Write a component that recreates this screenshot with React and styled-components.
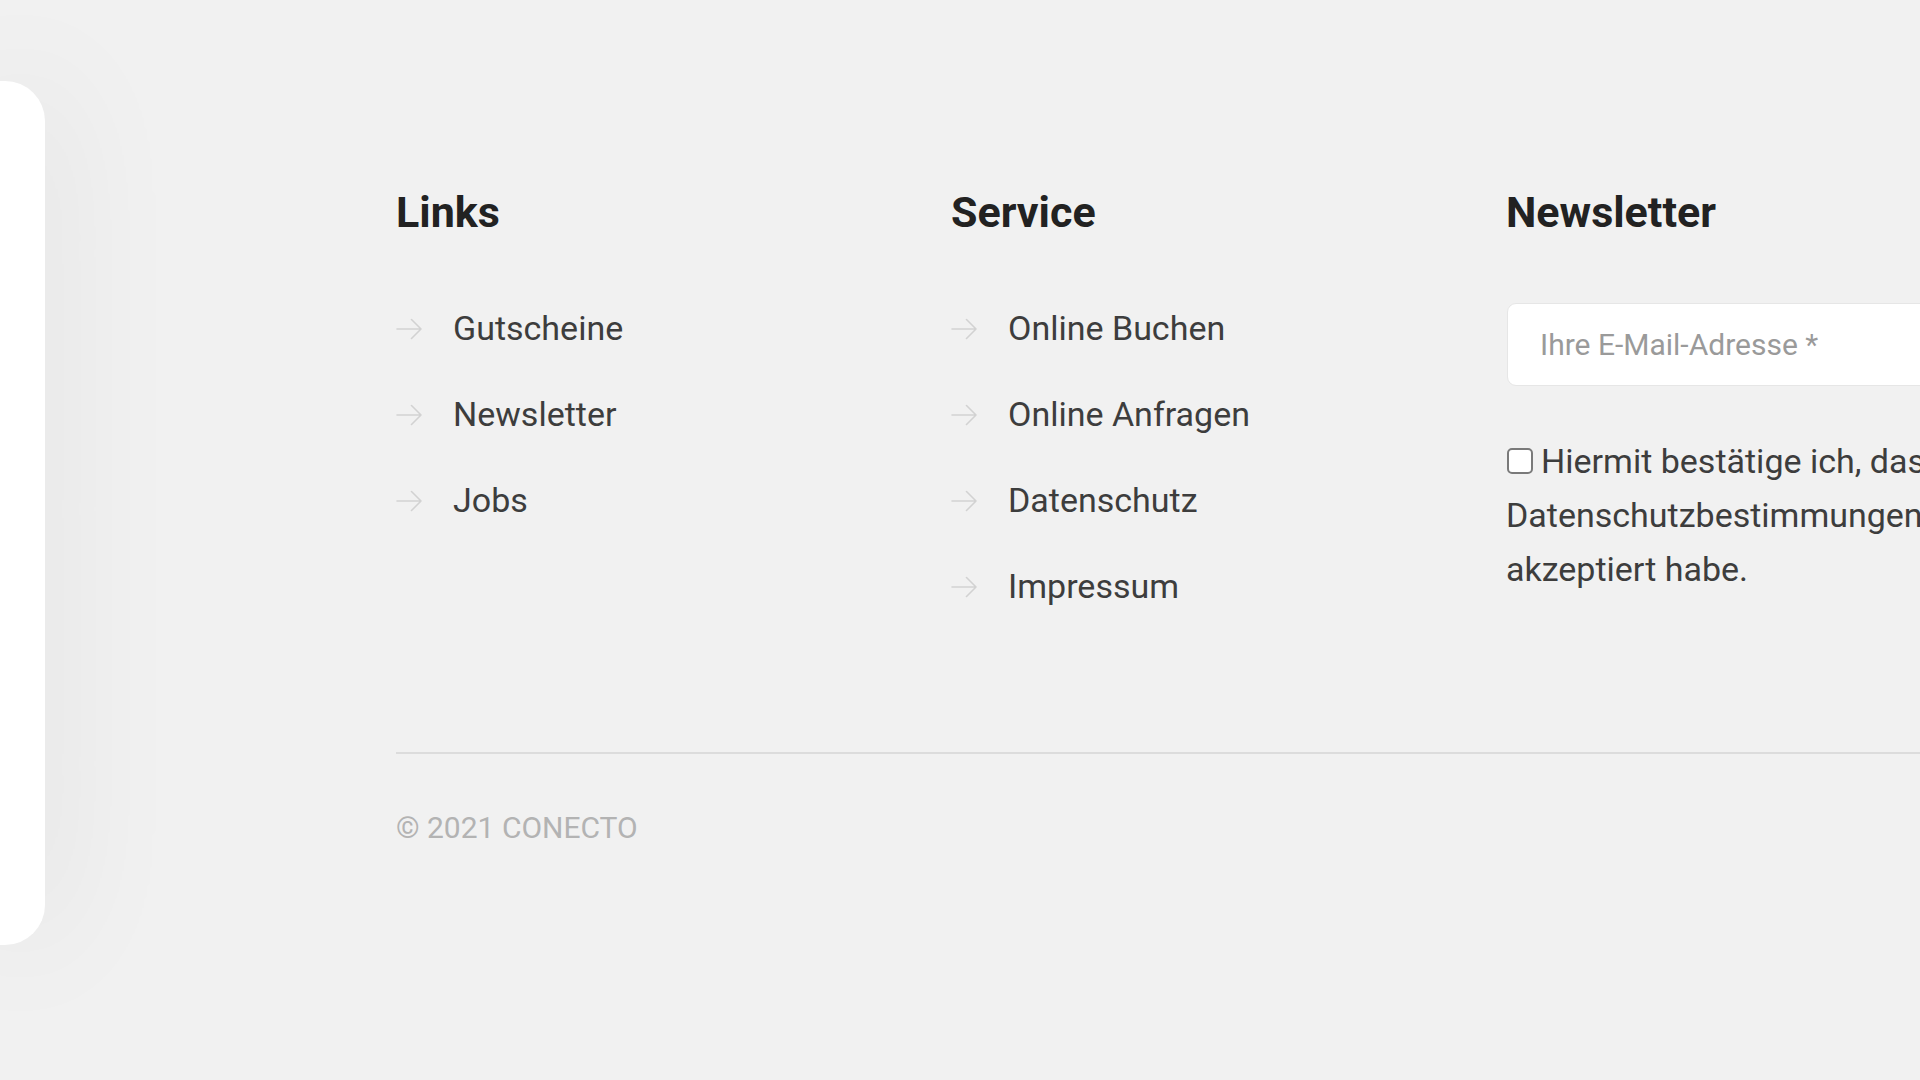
import styled, { createGlobalStyle } from "styled-components";

const GlobalStyle = createGlobalStyle`
  html, body {
    margin: 0;
    padding: 0;
    overflow: hidden;
    background: #f1f1f1;
  }
  * {
    box-sizing: border-box;
  }
`;

const Page = styled.div`
  width: 1920px;
  height: 1080px;
  display: flex;
  overflow: hidden;
  background: #f1f1f1;
  font-family: Roboto, "Liberation Sans", sans-serif;
`;

const SidePanel = styled.aside`
  flex: 0 0 45px;
  margin: 81px 0 135px;
  background: #fff;
  border-radius: 0 40px 40px 0;
  box-shadow: 0 0 130px rgba(0, 0, 0, 0.1);
`;

const Footer = styled.footer`
  flex: 0 0 auto;
  padding: 187px 0 0 351px;
`;

const Columns = styled.div`
  display: grid;
  grid-template-columns: repeat(3, 555px);
  padding-bottom: 107px;
`;

const Column = styled.div`
  display: flex;
  flex-direction: column;
`;

const Heading = styled.h3`
  margin: 0 0 64px;
  font-size: 43px;
  line-height: 50px;
  font-weight: 700;
  color: #222;
`;

const List = styled.ul`
  margin: 0;
  padding: 0;
  list-style: none;
`;

const ListItem = styled.li`
  display: flex;
  align-items: center;
  height: 54px;
  margin-bottom: 32px;
  font-size: 34px;
  color: #3d3d3d;
`;

const ArrowIcon = styled.svg`
  flex: 0 0 26px;
  width: 26px;
  height: 26px;
  margin-right: 31px;
  margin-top: 2px;
  stroke: #d2d2d2;
  stroke-width: 1.6;
  fill: none;
  stroke-linecap: round;
  stroke-linejoin: round;
`;

const Arrow = () => (
  <ArrowIcon viewBox="0 0 26 26">
    <path d="M1 13h24M15.5 3.5L25 13l-9.5 9.5" />
  </ArrowIcon>
);

const EmailInput = styled.input`
  width: 640px;
  height: 83px;
  margin: 2px 0 48px 1px;
  padding: 0 32px;
  border: 1px solid #e6e6e6;
  border-radius: 9px;
  background: #fff;
  font-family: Roboto, "Liberation Sans", sans-serif;
  font-size: 30px;
  color: #333;
  outline: none;

  &::placeholder {
    color: #9a9a9a;
  }
`;

const Consent = styled.label`
  display: block;
  width: 680px;
  font-size: 34px;
  line-height: 54px;
  color: #3d3d3d;
`;

const CheckBox = styled.span`
  display: inline-block;
  width: 26px;
  height: 26px;
  margin: 0 8px 0 1px;
  vertical-align: -1px;
  border: 2px solid #7a7a7a;
  border-radius: 5px;
  background: #fff;
`;

const Divider = styled.hr`
  width: 1600px;
  margin: 0;
  border: none;
  border-top: 2px solid #dcdcdc;
`;

const Copyright = styled.p`
  margin: 52px 0 0;
  font-size: 30px;
  line-height: 44px;
  color: #b3b3b3;
`;

const links = ["Gutscheine", "Newsletter", "Jobs"];
const service = ["Online Buchen", "Online Anfragen", "Datenschutz", "Impressum"];

const App = () => {
  return (
    <Page>
      <GlobalStyle />
      <SidePanel />
      <Footer>
        <Columns>
          <Column>
            <Heading>Links</Heading>
            <List>
              {links.map((item) => (
                <ListItem key={item}>
                  <Arrow />
                  {item}
                </ListItem>
              ))}
            </List>
          </Column>
          <Column>
            <Heading>Service</Heading>
            <List>
              {service.map((item) => (
                <ListItem key={item}>
                  <Arrow />
                  {item}
                </ListItem>
              ))}
            </List>
          </Column>
          <Column>
            <Heading>Newsletter</Heading>
            <EmailInput type="email" placeholder="Ihre E-Mail-Adresse *" />
            <Consent>
              <CheckBox />
              Hiermit bestätige ich, dass ich die Datenschutzbestimmungen
              gelesen und akzeptiert habe.
            </Consent>
          </Column>
        </Columns>
        <Divider />
        <Copyright>© 2021 CONECTO</Copyright>
      </Footer>
    </Page>
  );
};

export default App;
